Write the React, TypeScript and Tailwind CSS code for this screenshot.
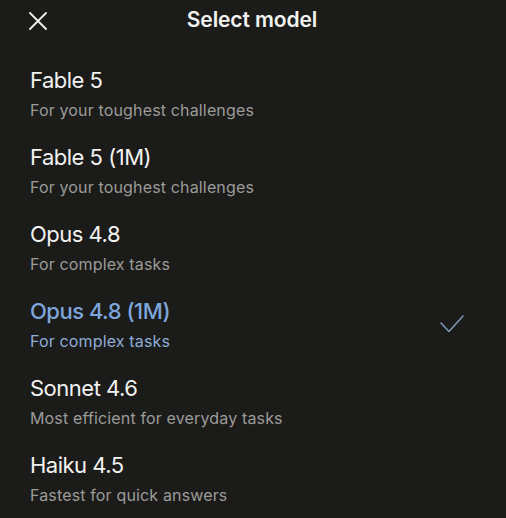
import React from "react";

const models = [
  { name: "Fable 5", desc: "For your toughest challenges" },
  { name: "Fable 5 (1M)", desc: "For your toughest challenges" },
  { name: "Opus 4.8", desc: "For complex tasks" },
  { name: "Opus 4.8 (1M)", desc: "For complex tasks", selected: true },
  { name: "Sonnet 4.6", desc: "Most efficient for everyday tasks" },
  { name: "Haiku 4.5", desc: "Fastest for quick answers" },
];

export default function App() {
  return (
    <div
      className="w-[506px] h-[518px] bg-[#1b1b1a] overflow-hidden text-[#f2f2f0]"
      style={{ fontFamily: "Inter, 'Noto Sans', sans-serif" }}
    >
      <div className="relative h-[34px] pt-[6px] flex justify-center">
        <svg
          className="absolute left-[29px] top-[12px]"
          width="18"
          height="18"
          viewBox="0 0 18 18"
          fill="none"
          stroke="#f2f2f0"
          strokeWidth="1.8"
          strokeLinecap="round"
        >
          <path d="M1 1 17 17M17 1 1 17" />
        </svg>
        <div className="text-[21px] leading-[28px] font-semibold tracking-[-0.1px] translate-x-[-1px]">Select model</div>
      </div>
      <div className="mt-[21px] flex flex-col">
        {models.map((m) => (
          <div key={m.name} className="flex items-center pl-[30px] pr-[42px] pt-[11px] pb-[12px]">
            <div className="flex-1 flex flex-col gap-[6px]">
              <div
                className={
                  m.selected
                    ? "text-[22px] leading-[28px] font-medium text-[#7ea5db] tracking-[-0.5px]"
                    : "text-[22px] leading-[28px] text-[#f2f2f0] tracking-[-0.5px]"
                }
              >
                {m.name}
              </div>
              <div
                className={
                  m.selected
                    ? "text-[16px] leading-[20px] text-[#8fadd6] tracking-[0.15px]"
                    : "text-[16px] leading-[20px] text-[#9b9b98] tracking-[0.15px]"
                }
              >
                {m.desc}
              </div>
            </div>
            {m.selected && (
              <svg width="24" height="20" viewBox="0 0 24 20" fill="none" stroke="#8093bb" strokeWidth="1.6" strokeLinecap="round" strokeLinejoin="round">
                <polyline points="1,9 9,17.5 23,2" />
              </svg>
            )}
          </div>
        ))}
      </div>
    </div>
  );
}
